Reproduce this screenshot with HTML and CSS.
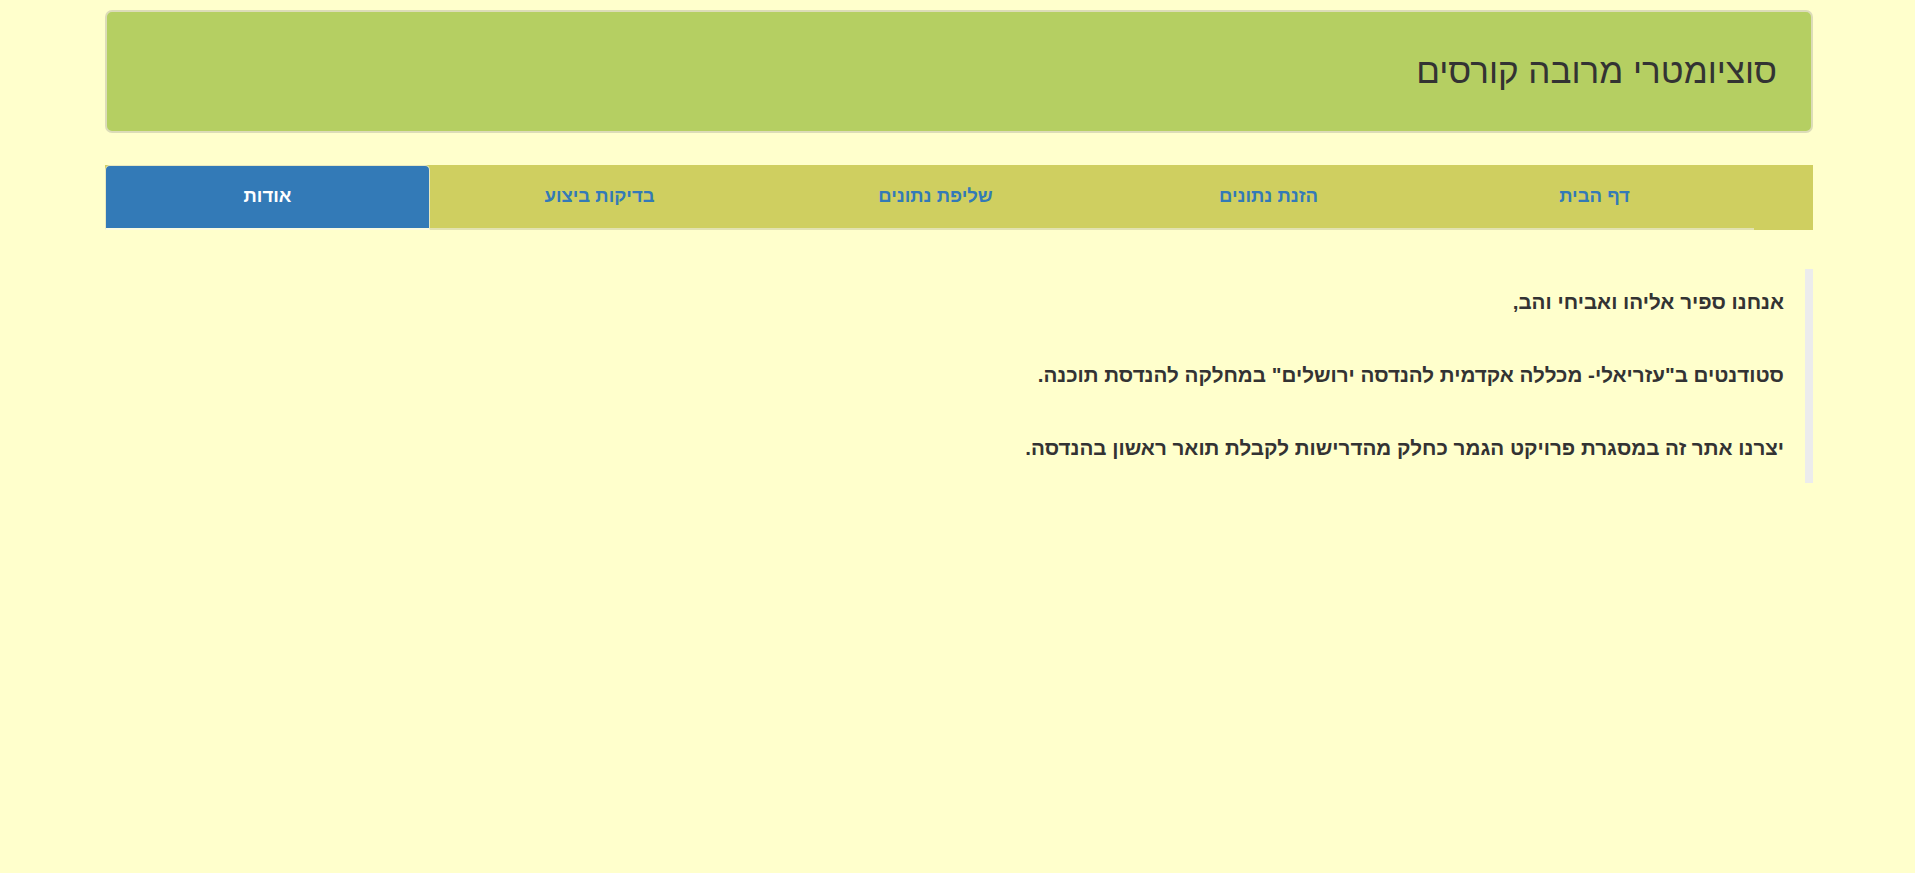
FILE: index.html
```html
<!DOCTYPE html>
<html lang="he" dir="rtl">
<head>
<meta charset="utf-8">
<title>סוציומטרי מרובה קורסים</title>
<link rel="stylesheet" href="styles.css">
</head>
<body>
<div class="container">
  <header class="site-header">
    <h1 class="site-title">סוציומטרי מרובה קורסים</h1>
  </header>
  <nav class="tabs">
    <ul class="tab-list">
      <li class="tab w319"><a href="#">דף הבית</a></li>
      <li class="tab w332"><a href="#">הזנת נתונים</a></li>
      <li class="tab w332"><a href="#">שליפת נתונים</a></li>
      <li class="tab w340"><a href="#">בדיקות ביצוע</a></li>
      <li class="tab w325 active"><a href="#">אודות</a></li>
    </ul>
  </nav>
  <blockquote class="about">
    <p>אנחנו ספיר אליהו ואביחי והב,</p>
    <p>סטודנטים ב"עזריאלי- מכללה אקדמית להנדסה ירושלים" במחלקה להנדסת תוכנה.</p>
    <p>יצרנו אתר זה במסגרת פרויקט הגמר כחלק מהדרישות לקבלת תואר ראשון בהנדסה.</p>
  </blockquote>
</div>
</body>
</html>
```
FILE: styles.css
```css
html, body {
  margin: 0;
  padding: 0;
}
body {
  background: #ffffcc;
  font-family: "Liberation Sans", "DejaVu Sans", sans-serif;
  color: #333;
  height: 873px;
  overflow: hidden;
}
.container {
  width: 1708px;
  margin-right: 102px;
  margin-left: auto;
  padding-top: 10px;
}
.site-header {
  box-sizing: border-box;
  height: 123px;
  background: #b5cf62;
  border: 2px solid #dcdcb8;
  border-radius: 7px;
  display: flex;
  align-items: center;
  padding-right: 34px;
}
.site-title {
  margin: 0;
  font-size: 35px;
  font-weight: normal;
  color: #333;
  line-height: 1.1;
}
.tabs {
  margin-top: 32px;
  background: #cfcf60;
  height: 65px;
  padding-right: 59px;
}
.tab-list {
  list-style: none;
  margin: 0;
  padding: 0;
  display: flex;
  height: 65px;
}
.tab {
  box-sizing: border-box;
  height: 65px;
  border-bottom: 2px solid #e2e2b0;
  display: flex;
}
.tab a {
  flex: 1;
  display: flex;
  align-items: center;
  justify-content: center;
  color: #337ab7;
  font-weight: bold;
  font-size: 18.5px;
  text-decoration: none;
  padding-bottom: 2px;
}
.tab.active {
  background: #337ab7;
  border: 1px solid #e8e8c0;
  border-bottom: 2px solid #fbfbe0;
  border-radius: 5px 5px 0 0;
}
.tab.active a {
  color: #fff;
}
.w319 { width: 319px; }
.w332 { width: 333px; }
.w340 { width: 339px; }
.w325 { width: 325px; }
.about {
  margin: 39px 0 0 0;
  border-right: 8px solid #ececec;
  padding: 21px 21px 23px 20px;
}
.about p {
  margin: 0 0 49px 0;
  line-height: 24px;
  font-size: 20.6px;
  font-weight: bold;
  color: #333;
}
.about p:last-child {
  margin-bottom: 0;
}
```
